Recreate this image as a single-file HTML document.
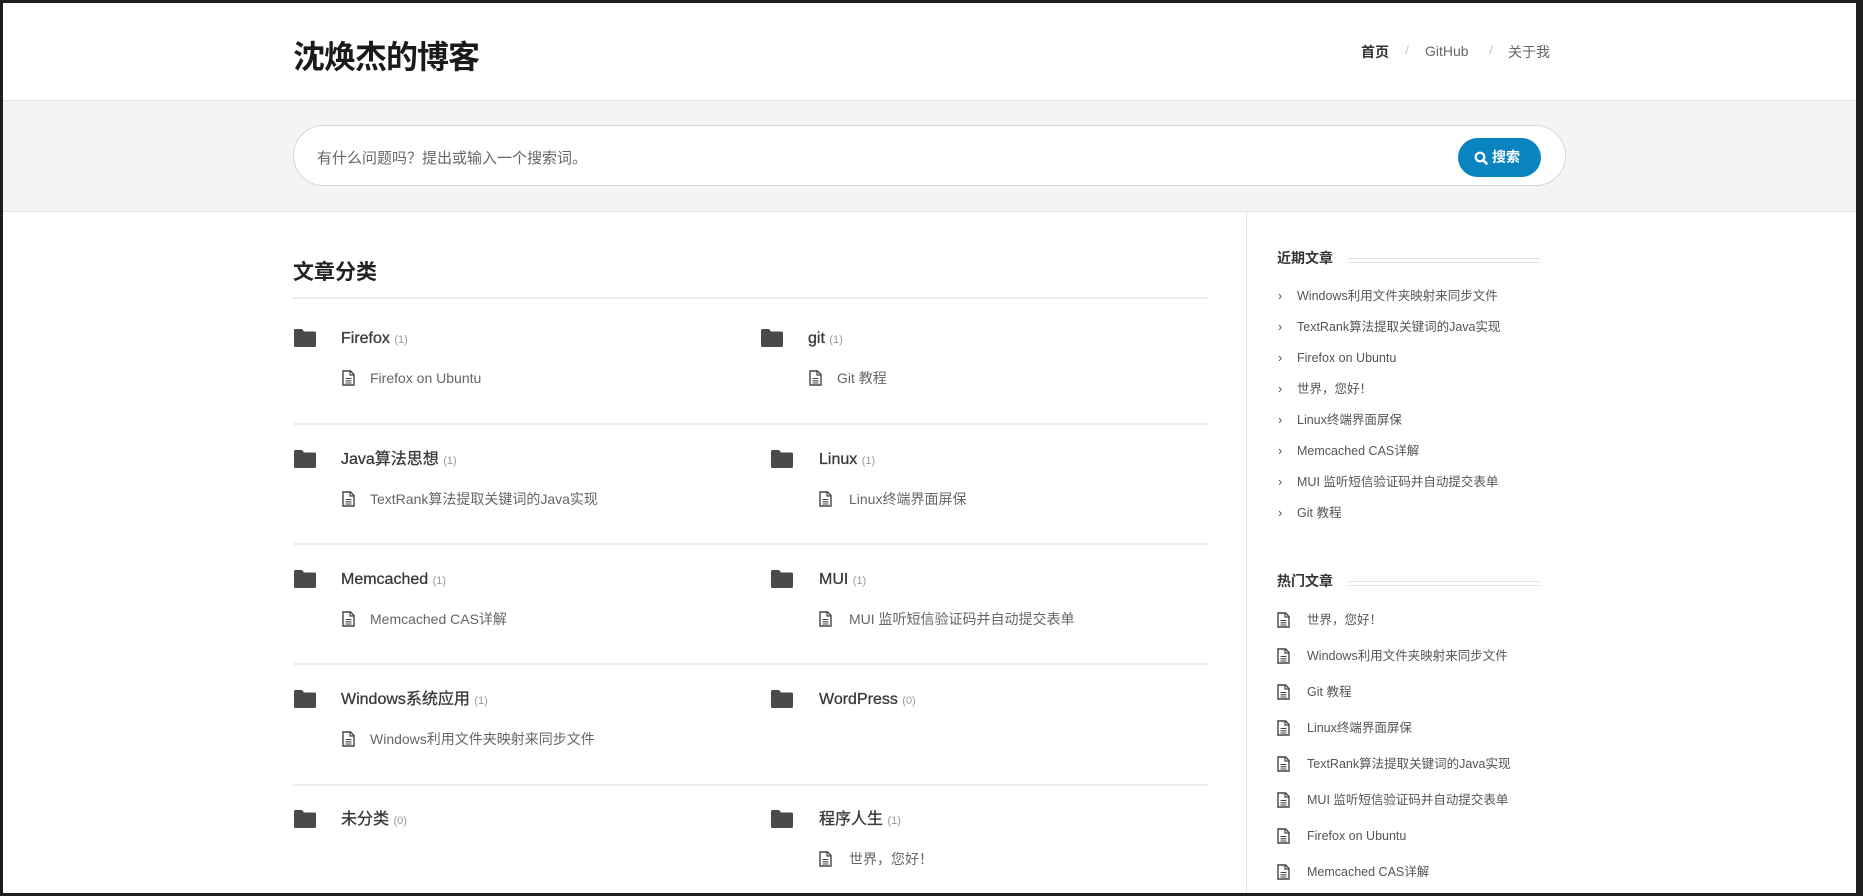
<!DOCTYPE html>
<html><head><meta charset="utf-8"><style>
*{margin:0;padding:0;box-sizing:border-box}
body{width:1863px;height:896px;background:#1e1e1e;position:relative;overflow:hidden;font-family:"Liberation Sans","Noto Sans CJK SC",sans-serif}
#pg{position:absolute;left:3px;top:3px;width:1853px;height:890px;background:#fff;overflow:hidden}
.a{position:absolute;white-space:nowrap}
.fold{position:absolute;width:24px;height:20px}
.cat{position:absolute;font-size:16px;color:#3a3a3a;font-weight:normal;line-height:20px;-webkit-text-stroke:0.3px #3a3a3a}
.cat small{font-size:11px;color:#999;font-weight:normal;-webkit-text-stroke:0}
.it{position:absolute;font-size:14px;color:#666;line-height:18px}
.doc{position:absolute;width:13px;height:16px}
.r{position:absolute;font-size:12.5px;color:#555;line-height:16px}
</style></head><body><div id="pg">
<div class="a" style="left:290px;top:29px;font-size:32px;font-weight:bold;color:#1a1a1a;letter-spacing:-1px">沈焕杰的博客</div>
<div class="a" style="left:1358px;top:39px;font-size:14px;color:#333;font-weight:bold">首页</div>
<div class="a" style="left:1402px;top:39px;font-size:14px;color:#ccc">/</div>
<div class="a" style="left:1422px;top:40px;font-size:14px;color:#666">GitHub</div>
<div class="a" style="left:1486px;top:39px;font-size:14px;color:#ccc">/</div>
<div class="a" style="left:1505px;top:39px;font-size:14px;color:#666">关于我</div>
<div class="a" style="left:0;top:97px;width:1853px;height:112px;background:#f4f4f4;border-top:1px solid #e6e6e6;border-bottom:1px solid #e6e6e6"></div>
<div class="a" style="left:290px;top:122px;width:1273px;height:61px;background:#fff;border:1px solid #d8d8d8;border-radius:31px"></div>
<div class="a" style="left:314px;top:144px;font-size:15px;color:#666">有什么问题吗？提出或输入一个搜索词。</div>
<div class="a" style="left:1455px;top:135px;width:83px;height:39px;background:#0a84c0;border-radius:20px;color:#fff;font-size:14px;line-height:39px;font-weight:bold;padding-left:17px">
<svg style="position:absolute;left:16px;top:13px" width="14" height="14" viewBox="0 0 14 14"><circle cx="6" cy="6" r="4.3" fill="none" stroke="#fff" stroke-width="2.2"/><path d="M9 9l3.5 3.5" stroke="#fff" stroke-width="2.6" stroke-linecap="round"/></svg><span style="margin-left:17px">搜索</span></div>
<div class="a" style="left:1243px;top:209px;width:1px;height:700px;background:#e6e6e6"></div>
<div class="a" style="left:290px;top:253px;font-size:21px;font-weight:bold;color:#222">文章分类</div>
<div class="a" style="left:290px;top:294px;width:915px;height:2px;background:#eee"></div>
<div class="a" style="left:290px;top:420px;width:915px;height:2px;background:#eee"></div>
<div class="a" style="left:290px;top:540px;width:915px;height:2px;background:#eee"></div>
<div class="a" style="left:290px;top:660px;width:915px;height:2px;background:#eee"></div>
<div class="a" style="left:290px;top:781px;width:915px;height:2px;background:#eee"></div>

<svg width="0" height="0" style="position:absolute"><defs>
<symbol id="f" viewBox="0 0 24 20"><path d="M1 2.5Q1 1 2.5 1H9L11 3.5H21.5Q23 3.5 23 5V17.5Q23 19 21.5 19H2.5Q1 19 1 17.5Z" fill="#4a4a4a"/></symbol>
<symbol id="d" viewBox="0 0 13 16"><path d="M1 1H8.5L12 4.5V15H1Z" fill="none" stroke="#444" stroke-width="1.4"/><path d="M8 1V5H12" fill="none" stroke="#444" stroke-width="1.2"/><path d="M3.5 8.5H9.5M3.5 10.8H9.5M3.5 13H9.5" stroke="#444" stroke-width="1.1"/></symbol>
</defs></svg>

<svg class="fold" style="left:290px;top:325px"><use href="#f"/></svg><div class="cat" style="left:338px;top:326px">Firefox <small>(1)</small></div>
<svg class="doc" style="left:339px;top:367px"><use href="#d"/></svg><div class="it" style="left:367px;top:366px">Firefox on Ubuntu</div>
<svg class="fold" style="left:757px;top:325px"><use href="#f"/></svg><div class="cat" style="left:805px;top:326px">git <small>(1)</small></div>
<svg class="doc" style="left:806px;top:367px"><use href="#d"/></svg><div class="it" style="left:834px;top:366px">Git 教程</div>

<svg class="fold" style="left:290px;top:446px"><use href="#f"/></svg><div class="cat" style="left:338px;top:447px">Java算法思想 <small>(1)</small></div>
<svg class="doc" style="left:339px;top:488px"><use href="#d"/></svg><div class="it" style="left:367px;top:487px">TextRank算法提取关键词的Java实现</div>
<svg class="fold" style="left:767px;top:446px"><use href="#f"/></svg><div class="cat" style="left:816px;top:447px">Linux <small>(1)</small></div>
<svg class="doc" style="left:816px;top:488px"><use href="#d"/></svg><div class="it" style="left:846px;top:487px">Linux终端界面屏保</div>

<svg class="fold" style="left:290px;top:566px"><use href="#f"/></svg><div class="cat" style="left:338px;top:567px">Memcached <small>(1)</small></div>
<svg class="doc" style="left:339px;top:608px"><use href="#d"/></svg><div class="it" style="left:367px;top:607px">Memcached CAS详解</div>
<svg class="fold" style="left:767px;top:566px"><use href="#f"/></svg><div class="cat" style="left:816px;top:567px">MUI <small>(1)</small></div>
<svg class="doc" style="left:816px;top:608px"><use href="#d"/></svg><div class="it" style="left:846px;top:607px">MUI 监听短信验证码并自动提交表单</div>

<svg class="fold" style="left:290px;top:686px"><use href="#f"/></svg><div class="cat" style="left:338px;top:687px">Windows系统应用 <small>(1)</small></div>
<svg class="doc" style="left:339px;top:728px"><use href="#d"/></svg><div class="it" style="left:367px;top:727px">Windows利用文件夹映射来同步文件</div>
<svg class="fold" style="left:767px;top:686px"><use href="#f"/></svg><div class="cat" style="left:816px;top:687px">WordPress <small>(0)</small></div>

<svg class="fold" style="left:290px;top:806px"><use href="#f"/></svg><div class="cat" style="left:338px;top:807px">未分类 <small>(0)</small></div>
<svg class="fold" style="left:767px;top:806px"><use href="#f"/></svg><div class="cat" style="left:816px;top:807px">程序人生 <small>(1)</small></div>
<svg class="doc" style="left:816px;top:848px"><use href="#d"/></svg><div class="it" style="left:846px;top:847px">世界，您好！</div>

<div class="a" style="left:1274px;top:245px;font-size:14px;font-weight:bold;color:#333">近期文章</div>
<div class="a" style="left:1345px;top:255px;width:192px;height:5px;border-top:1px solid #e4e4e4;border-bottom:1px solid #e4e4e4"></div>
<div class="a" style="left:1274px;top:568px;font-size:14px;font-weight:bold;color:#333">热门文章</div>
<div class="a" style="left:1345px;top:578px;width:192px;height:5px;border-top:1px solid #e4e4e4;border-bottom:1px solid #e4e4e4"></div>

<div class="r" style="left:1275px;top:285px">›</div><div class="r" style="left:1294px;top:285px">Windows利用文件夹映射来同步文件</div>
<div class="r" style="left:1275px;top:316px">›</div><div class="r" style="left:1294px;top:316px">TextRank算法提取关键词的Java实现</div>
<div class="r" style="left:1275px;top:347px">›</div><div class="r" style="left:1294px;top:347px">Firefox on Ubuntu</div>
<div class="r" style="left:1275px;top:378px">›</div><div class="r" style="left:1294px;top:378px">世界，您好！</div>
<div class="r" style="left:1275px;top:409px">›</div><div class="r" style="left:1294px;top:409px">Linux终端界面屏保</div>
<div class="r" style="left:1275px;top:440px">›</div><div class="r" style="left:1294px;top:440px">Memcached CAS详解</div>
<div class="r" style="left:1275px;top:471px">›</div><div class="r" style="left:1294px;top:471px">MUI 监听短信验证码并自动提交表单</div>
<div class="r" style="left:1275px;top:502px">›</div><div class="r" style="left:1294px;top:502px">Git 教程</div>

<svg class="doc" style="left:1274px;top:609px"><use href="#d"/></svg><div class="r" style="left:1304px;top:609px">世界，您好！</div>
<svg class="doc" style="left:1274px;top:645px"><use href="#d"/></svg><div class="r" style="left:1304px;top:645px">Windows利用文件夹映射来同步文件</div>
<svg class="doc" style="left:1274px;top:681px"><use href="#d"/></svg><div class="r" style="left:1304px;top:681px">Git 教程</div>
<svg class="doc" style="left:1274px;top:717px"><use href="#d"/></svg><div class="r" style="left:1304px;top:717px">Linux终端界面屏保</div>
<svg class="doc" style="left:1274px;top:753px"><use href="#d"/></svg><div class="r" style="left:1304px;top:753px">TextRank算法提取关键词的Java实现</div>
<svg class="doc" style="left:1274px;top:789px"><use href="#d"/></svg><div class="r" style="left:1304px;top:789px">MUI 监听短信验证码并自动提交表单</div>
<svg class="doc" style="left:1274px;top:825px"><use href="#d"/></svg><div class="r" style="left:1304px;top:825px">Firefox on Ubuntu</div>
<svg class="doc" style="left:1274px;top:861px"><use href="#d"/></svg><div class="r" style="left:1304px;top:861px">Memcached CAS详解</div>
</div></body></html>
